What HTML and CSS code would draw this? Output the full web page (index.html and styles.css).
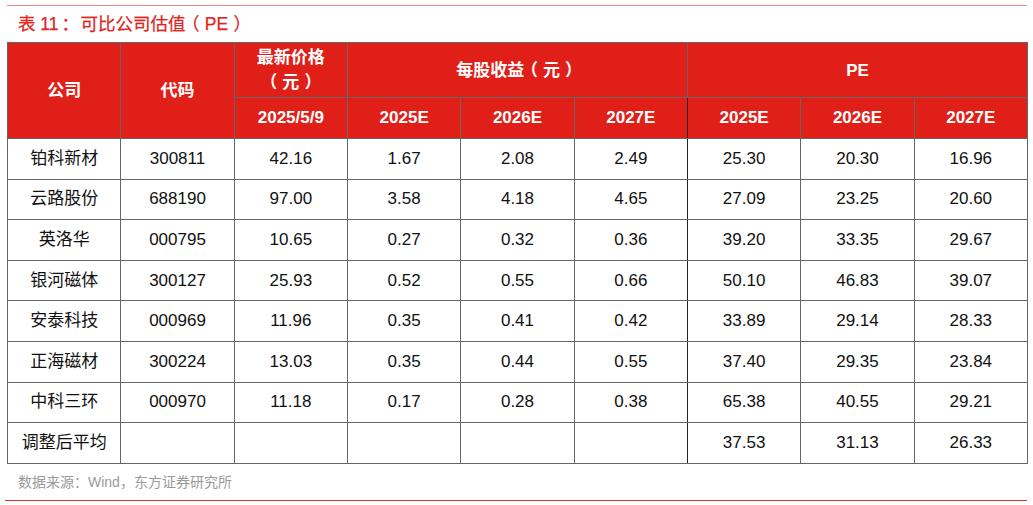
FILE: index.html
```html
<!DOCTYPE html>
<html lang="zh-CN">
<head>
<meta charset="utf-8">
<title>可比公司估值（PE）</title>
<link rel="stylesheet" href="styles.css">
</head>
<body>
<div class="page">
  <div class="rule-top"></div>
  <div class="title">表 11<span class="colon">：</span>可比公司估值<span class="fp">（</span>PE<span class="fp">）</span></div>
  <table class="grid">
    <colgroup>
      <col><col><col><col><col><col><col><col><col>
    </colgroup>
    <thead>
      <tr class="h1">
        <th rowspan="2">公司</th>
        <th rowspan="2">代码</th>
        <th class="two">最新价格<br><span class="fp">（</span>元<span class="fp">）</span></th>
        <th colspan="3">每股收益<span class="fp">（</span>元<span class="fp">）</span></th>
        <th colspan="3">PE</th>
      </tr>
      <tr class="h2">
        <th>2025/5/9</th>
        <th>2025E</th>
        <th>2026E</th>
        <th class="dark">2027E</th>
        <th>2025E</th>
        <th>2026E</th>
        <th>2027E</th>
      </tr>
    </thead>
    <tbody>
      <tr><td>铂科新材</td><td>300811</td><td>42.16</td><td>1.67</td><td>2.08</td><td class="dark">2.49</td><td>25.30</td><td>20.30</td><td>16.96</td></tr>
      <tr><td>云路股份</td><td>688190</td><td>97.00</td><td>3.58</td><td>4.18</td><td class="dark">4.65</td><td>27.09</td><td>23.25</td><td>20.60</td></tr>
      <tr><td>英洛华</td><td>000795</td><td>10.65</td><td>0.27</td><td>0.32</td><td class="dark">0.36</td><td>39.20</td><td>33.35</td><td>29.67</td></tr>
      <tr><td>银河磁体</td><td>300127</td><td>25.93</td><td>0.52</td><td>0.55</td><td class="dark">0.66</td><td>50.10</td><td>46.83</td><td>39.07</td></tr>
      <tr><td>安泰科技</td><td>000969</td><td>11.96</td><td>0.35</td><td>0.41</td><td class="dark">0.42</td><td>33.89</td><td>29.14</td><td>28.33</td></tr>
      <tr><td>正海磁材</td><td>300224</td><td>13.03</td><td>0.35</td><td>0.44</td><td class="dark">0.55</td><td>37.40</td><td>29.35</td><td>23.84</td></tr>
      <tr><td>中科三环</td><td>000970</td><td>11.18</td><td>0.17</td><td>0.28</td><td class="dark">0.38</td><td>65.38</td><td>40.55</td><td>29.21</td></tr>
      <tr><td>调整后平均</td><td></td><td></td><td></td><td></td><td class="dark"></td><td>37.53</td><td>31.13</td><td>26.33</td></tr>
    </tbody>
  </table>
  <div class="source">数据来源：Wind，东方证券研究所</div>
  <div class="rule-bottom"></div>
</div>
</body>
</html>
```

FILE: styles.css
```css
html, body {
  margin: 0;
  padding: 0;
  background: #ffffff;
}

body {
  font-family: "Liberation Sans", "Noto Sans CJK SC", sans-serif;
  color: #111111;
}

.page {
  width: 1033px;
  height: 505px;
  overflow: hidden;
  padding-top: 5px;
  box-sizing: border-box;
}

.rule-top {
  margin: 0 6px 0 7px;
  height: 1px;
  background: #f08a8a;
}

.title {
  margin: 6px 0 0 18px;
  font-size: 17.5px;
  line-height: 24px;
  color: #e0251f;
  -webkit-text-stroke: 0.25px #e0251f;
}

.fp {
  display: inline-block;
  width: 1.1em;
  text-align: center;
  font-feature-settings: "halt";
}

.colon {
  display: inline-block;
  width: 22px;
  padding-left: 3px;
  box-sizing: border-box;
  text-align: left;
  font-feature-settings: "halt";
}

.grid {
  margin: 6px 0 0 7px;
  width: 1020px;
  table-layout: fixed;
  border-collapse: collapse;
  font-size: 17px;
}

.grid col {
  width: 113.33px;
}

.grid th,
.grid td {
  border: 1px solid #666666;
  text-align: center;
  vertical-align: middle;
  padding: 0;
}

.grid th {
  background: #e11f19;
  color: #ffffff;
  font-weight: bold;
}

.grid .h1 th {
  height: 54px;
  line-height: 25px;
}

.grid .h2 th {
  height: 40px;
  line-height: 20px;
}

.grid td {
  height: 39.6px;
  line-height: 20px;
}

.grid .dark {
  border-right-color: #222222;
}

.source {
  margin: 8px 0 0 18px;
  font-size: 14px;
  line-height: 20px;
  color: #9a9a9a;
}

.rule-bottom {
  margin: 8px 6px 0 5px;
  height: 1px;
  background: #d8372d;
}
```
